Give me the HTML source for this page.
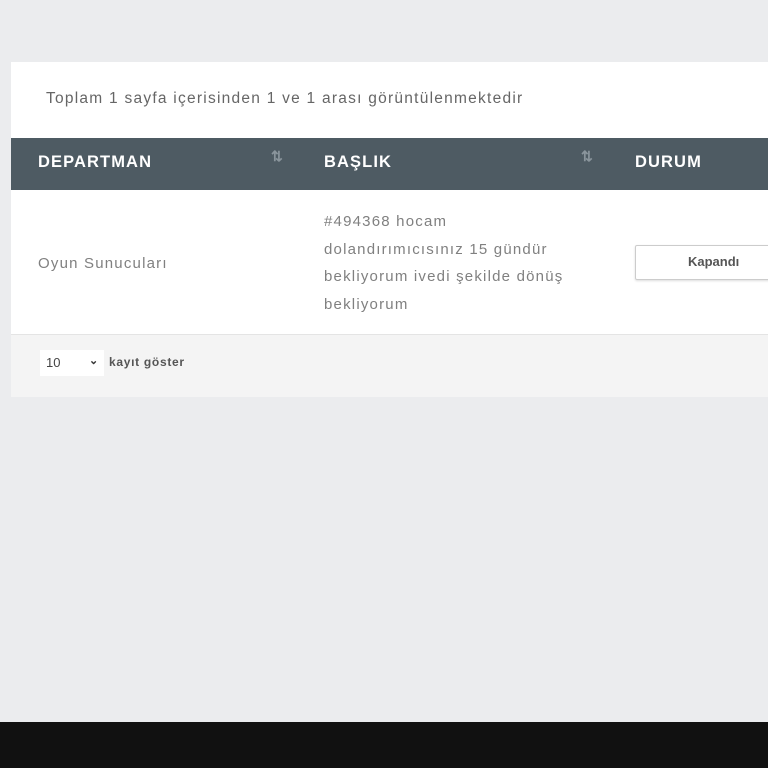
<!DOCTYPE html>
<html><head><style>
body{margin:0;width:768px;height:768px;background:#ebecee;font-family:"Liberation Sans",sans-serif;position:relative;overflow:hidden}
.a{position:absolute}
.card{left:11px;top:62px;width:757px;height:334px;background:#fff}
.t{color:#666;font-size:15.5px;letter-spacing:1.25px}
.hd{left:11px;top:138px;width:757px;height:52px;background:#4e5b63}
.h{color:#fff;font-weight:bold;font-size:16.5px;top:153px;letter-spacing:1.1px}
.s{color:#8a959c;font-size:14px;top:148px;font-weight:bold}
.ft{left:11px;top:334px;width:757px;height:62px;background:#f4f4f4;border-top:1px solid #e4e4e4}
.c{color:#808080;font-size:15px;letter-spacing:1.2px}
</style></head><body>
<div class="a card"></div>
<div class="a t" style="left:46px;top:90px">Toplam 1 sayfa içerisinden 1 ve 1 arası görüntülenmektedir</div>
<div class="a hd"></div>
<div class="a h" style="left:38px">DEPARTMAN</div>
<div class="a s" style="left:271px">⇅</div>
<div class="a h" style="left:324px">BAŞLIK</div>
<div class="a s" style="left:581px">⇅</div>
<div class="a h" style="left:635px">DURUM</div>
<div class="a c" style="left:38px;top:255px">Oyun Sunucuları</div>
<div class="a c" style="left:324px;top:208px;line-height:27.5px;width:300px">#494368 hocam<br>dolandırımıcısınız 15 gündür<br>bekliyorum ivedi şekilde dönüş<br>bekliyorum</div>
<div class="a" style="left:635px;top:245px;width:140px;height:35px;border:1px solid #ccc;border-radius:2px;box-sizing:border-box;box-shadow:0 1px 2px #ddd"></div>
<div class="a" style="left:688px;top:254px;font-weight:bold;font-size:13px;color:#555">Kapandı</div>
<div class="a ft"></div>
<div class="a" style="left:40px;top:350px;width:64px;height:26px;background:#fff"></div>
<div class="a" style="left:46px;top:355px;font-size:13px;color:#444">10</div>
<div class="a" style="left:89px;top:354px;font-size:11px;color:#333;font-weight:bold">⌄</div>
<div class="a" style="left:109px;top:355px;font-size:12px;color:#555;font-weight:bold;letter-spacing:0.7px">kayıt göster</div>
<div class="a" style="left:0;top:722px;width:768px;height:46px;background:#111"></div>
</body></html>
